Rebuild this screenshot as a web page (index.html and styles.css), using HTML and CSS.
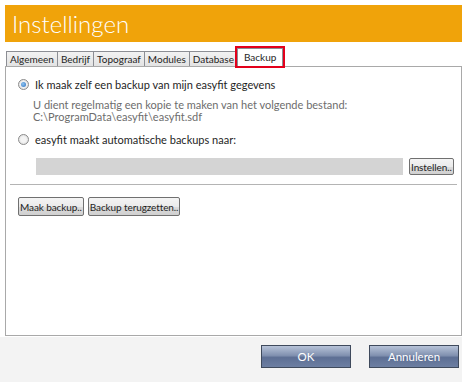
FILE: index.html
```html
<!DOCTYPE html>
<html lang="nl">
<head>
    <meta charset="UTF-8">
    <title>Instellingen</title>
    <link rel="stylesheet" href="styles.css">
</head>
<body>
    <div class="dialog">
        <div class="header">
            <h1>Instellingen</h1>
        </div>
        <div class="tabs">
            <div class="tab">Algemeen</div>
            <div class="tab">Bedrijf</div>
            <div class="tab">Topograaf</div>
            <div class="tab">Modules</div>
            <div class="tab">Database</div>
            <div class="tab active">Backup</div>
        </div>
        <div class="panel">
            <label class="option">
                <span class="radio checked"></span>
                Ik maak zelf een backup van mijn easyfit gegevens
            </label>
            <div class="hint">
                <p>U dient regelmatig een kopie te maken van het volgende bestand:</p>
                <p>C:\ProgramData\easyfit\easyfit.sdf</p>
            </div>
            <label class="option">
                <span class="radio"></span>
                easyfit maakt automatische backups naar:
            </label>
            <div class="path-row">
                <div class="path"></div>
                <button class="btn">Instellen..</button>
            </div>
            <div class="separator"></div>
            <div class="actions">
                <button class="btn">Maak backup..</button>
                <button class="btn">Backup terugzetten..</button>
            </div>
        </div>
        <div class="footer">
            <button class="main-btn">OK</button>
            <button class="main-btn">Annuleren</button>
        </div>
    </div>
</body>
</html>
```

FILE: styles.css
```css
body {
    margin: 0;
    padding: 0;
    background-color: #ffffff;
    font-family: Lato, "Open Sans", sans-serif;
    font-size: 11px;
    color: #1e1e1e;
}
.dialog {
    width: 462px;
    padding-top: 5px;
}
.header {
    margin-left: 5px;
    height: 37px;
    background-color: #f0a30a;
    display: flex;
    align-items: center;
}
.header h1 {
    margin: 0 0 0 7px;
    font-family: Lato, "Open Sans", sans-serif;
    font-weight: 300;
    font-size: 24px;
    color: #ffffff;
}
.tabs {
    margin: 5px 0 0 6px;
    display: flex;
    align-items: flex-end;
    height: 19px;
}
.tab {
    height: 14px;
    line-height: 14px;
    padding: 0 3px;
    border: 1px solid #8c8e94;
    border-right: none;
    border-bottom: none;
    background: linear-gradient(#f2f2f2, #e3e3e3);
    font-size: 10px;
}
.tab.active {
    height: 17px;
    line-height: 17px;
    padding: 0 6px;
    background: #ffffff;
    border: 1px solid #8c8e94;
    border-bottom: none;
    outline: 2px solid #e3001b;
    outline-offset: 0;
    position: relative;
    z-index: 1;
}
.panel {
    margin-left: 5px;
    height: 268px;
    border: 1px solid #a9a9a9;
    background-color: #ffffff;
    padding: 0 4px;
}
.option {
    display: flex;
    align-items: center;
    gap: 6px;
    margin-left: 8px;
    height: 16px;
}
.option:first-child {
    margin-top: 9px;
}
.radio {
    width: 9px;
    height: 9px;
    border-radius: 50%;
    border: 1px solid #8b8b8b;
    background: radial-gradient(circle, #f4f4f4 40%, #d4d4d4 100%);
    display: flex;
    align-items: center;
    justify-content: center;
}
.radio.checked::after {
    content: '';
    width: 5px;
    height: 5px;
    border-radius: 50%;
    background: radial-gradient(circle at 40% 40%, #8fc4f0, #2a6fbf);
}
.hint {
    margin: 7px 0 8px 23px;
    color: #6d6d6d;
}
.hint p {
    margin: 0;
    line-height: 12px;
}
.path-row {
    display: flex;
    align-items: center;
    gap: 6px;
    margin: 11px 0 0 26px;
}
.path {
    width: 367px;
    height: 17px;
    background-color: #d4d4d4;
}
.btn {
    font-family: inherit;
    font-size: 10px;
    letter-spacing: -0.1px;
    color: #1e1e1e;
    height: 17px;
    padding: 0 1px;
    border: 1px solid #707070;
    border-radius: 2px;
    background: linear-gradient(#f4f4f4 0%, #ebebeb 50%, #dcdcdc 51%, #d0d0d0 100%);
}
.separator {
    height: 1px;
    background-color: #b4b4b4;
    margin: 9px 0 0 0;
}
.actions {
    display: flex;
    gap: 4px;
    margin: 12px 0 0 8px;
}
.actions .btn {
    height: 19px;
}
.footer {
    height: 45px;
    background-color: #f3f3f3;
    display: flex;
    justify-content: flex-end;
    align-items: center;
    gap: 18px;
    padding-right: 3px;
    margin-top: 1px;
}
.main-btn {
    width: 90px;
    height: 23px;
    margin-top: -7px;
    border: 1px solid #3f4a5c;
    background: linear-gradient(#b7c3d8 0%, #8191b0 45%, #5d6f94 55%, #6d7fa2 100%);
    color: #ffffff;
    font-family: inherit;
    font-size: 11.5px;
}
```
